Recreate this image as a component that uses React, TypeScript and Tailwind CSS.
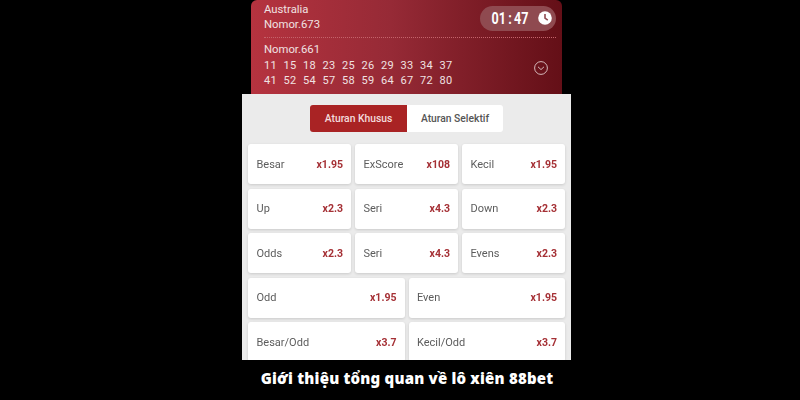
const row3 = [
  [
    { label: "Besar", odds: "x1.95" },
    { label: "ExScore", odds: "x108" },
    { label: "Kecil", odds: "x1.95" },
  ],
  [
    { label: "Up", odds: "x2.3" },
    { label: "Seri", odds: "x4.3" },
    { label: "Down", odds: "x2.3" },
  ],
  [
    { label: "Odds", odds: "x2.3" },
    { label: "Seri", odds: "x4.3" },
    { label: "Evens", odds: "x2.3" },
  ],
];

const row2 = [
  [
    { label: "Odd", odds: "x1.95" },
    { label: "Even", odds: "x1.95" },
  ],
  [
    { label: "Besar/Odd", odds: "x3.7" },
    { label: "Kecil/Odd", odds: "x3.7" },
  ],
];

const numbers = [
  ["11", "15", "18", "23", "25", "26", "29", "33", "34", "37"],
  ["41", "52", "54", "57", "58", "59", "64", "67", "72", "80"],
];

function BetCard({ label, odds }: { label: string; odds: string }) {
  return (
    <div className="flex h-[40px] flex-1 items-center justify-between rounded-[3px] bg-white pl-[8.5px] pr-[8px] pt-[1.5px] shadow-[0_1px_3px_rgba(0,0,0,0.14)]">
      <span className="text-[11px] text-[#5c5c5c]">{label}</span>
      <span className="text-[10.5px] font-bold text-[#a53035]">{odds}</span>
    </div>
  );
}

export default function App() {
  return (
    <div className="flex h-[400px] w-[800px] flex-col items-center overflow-hidden bg-black font-['Roboto',sans-serif]">
      <div className="ml-[13px] flex h-[360px] w-[329px] shrink-0 flex-col overflow-hidden blur-[0.35px]">
        {/* Draw header */}
        <div className="mx-[9px] flex h-[94px] shrink-0 flex-col rounded-t-[6px] bg-gradient-to-r from-[#b5333f] via-[#962a36] via-45% to-[#640f17] pl-[13px] pr-[6px] text-[#f0e2e2]">
          <div className="flex h-[38px] shrink-0 items-center justify-between border-b border-dotted border-[#c4636b] pb-[1px]">
            <div className="mt-[-3px] flex flex-col text-[11.3px] leading-[15px]">
              <span>Australia</span>
              <span>Nomor.673</span>
            </div>
            <div className="flex h-[25px] w-[76px] items-center justify-between rounded-full bg-[#8f4a50] pl-[7px] pr-[4px] text-white">
              <span className="flex w-[46px] origin-center scale-x-[0.74] items-center justify-center gap-[3px] whitespace-nowrap text-[17px] font-bold leading-none">
                <span>01</span>
                <span>:</span>
                <span>47</span>
              </span>
              <svg width="14" height="14" viewBox="0 0 14 14">
                <circle cx="7" cy="7" r="6.8" fill="#fff" />
                <path d="M7 3V7.2L9.8 9.2" fill="none" stroke="#8f4a50" strokeWidth="1.6" />
              </svg>
            </div>
          </div>
          <div className="flex flex-1 items-center justify-between pr-[8px]">
            <div className="mt-[-1px] flex flex-col text-[11px] leading-[15.5px]">
              <span className="text-[11.3px]">Nomor.661</span>
              {numbers.map((line) => (
                <div key={line[0]} className="flex gap-[7px] tracking-[0.4px]">
                  {line.map((n) => (
                    <span key={n} className="w-[12.5px]">{n}</span>
                  ))}
                </div>
              ))}
            </div>
            <svg width="14" height="14" viewBox="0 0 14 14" className="mt-[3px]">
              <circle cx="7" cy="7" r="6.4" fill="none" stroke="#f0e2e2" strokeWidth="0.8" />
              <path d="M4 5.8L7 8.6L10 5.8" fill="none" stroke="#f0e2e2" strokeWidth="0.8" />
            </svg>
          </div>
        </div>

        {/* Rules panel */}
        <div className="flex flex-1 flex-col bg-[#ebebeb] px-[6px]">
          <div className="mb-[12px] ml-[62px] mt-[11px] flex h-[27px] w-[193px] overflow-hidden rounded-[3px] text-[10.3px] font-medium">
            <div className="flex w-[97px] items-center justify-center bg-[#a92324] text-[#f3dcdc]">Aturan Khusus</div>
            <div className="flex flex-1 items-center justify-center bg-white text-[#555]">Aturan Selektif</div>
          </div>
          <div className="flex flex-col gap-[4.5px]">
            {row3.map((cards, i) => (
              <div key={i} className="flex gap-[4px]">
                {cards.map((c) => (
                  <BetCard key={c.label} label={c.label} odds={c.odds} />
                ))}
              </div>
            ))}
            {row2.map((cards, i) => (
              <div key={i} className="flex gap-[4px]">
                {cards.map((c) => (
                  <BetCard key={c.label} label={c.label} odds={c.odds} />
                ))}
              </div>
            ))}
          </div>
        </div>
      </div>
      <div className="ml-[14px] flex flex-1 items-center justify-center pb-[3px] font-['Noto_Sans',sans-serif] text-[15px] font-black tracking-[0.2px] text-white">
        Giới thiệu tổng quan về lô xiên 88bet
      </div>
    </div>
  );
}
